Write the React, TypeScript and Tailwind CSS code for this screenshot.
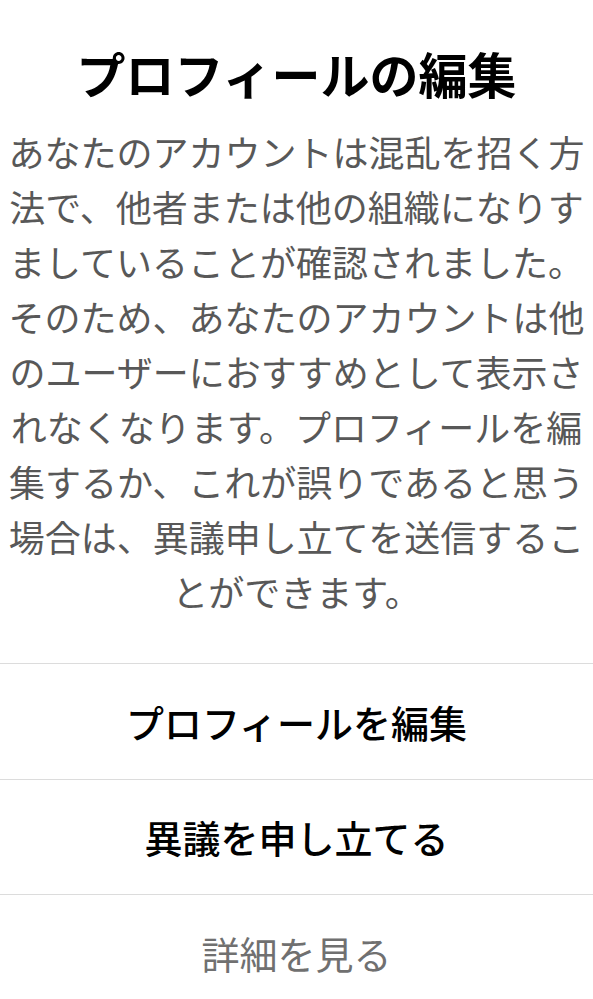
const font = { fontFamily: '"Noto Sans CJK JP", "Noto Sans", sans-serif' }

const actions = [
  { label: 'プロフィールを編集', tone: 'text-black font-medium' },
  { label: '異議を申し立てる', tone: 'text-black font-medium' },
  { label: '詳細を見る', tone: 'text-[#707070] font-normal' },
]

export default function App() {
  return (
    <div className="min-h-screen bg-white" style={font}>
      <div className="px-[6px] pt-[43px] text-center">
        <h1 className="text-[49px] leading-[60px] font-bold text-black">プロフィールの編集</h1>
        <p className="mt-[21px] text-[36px] leading-[55px] text-[#585858]">
          あなたのアカウントは混乱を招く方法で、他者または他の組織になりすましていることが確認されました。そのため、あなたのアカウントは他のユーザーにおすすめとして表示されなくなります。プロフィールを編集するか、これが誤りであると思う場合は、異議申し立てを送信することができます。
        </p>
      </div>
      <div className="mt-[44px]">
        {actions.map((a) => (
          <button
            key={a.label}
            className={`flex h-[115.5px] w-full items-center justify-center border-t border-[#dcdcdc] text-[38px] ${a.tone}`}
          >
            {a.label}
          </button>
        ))}
      </div>
    </div>
  )
}
